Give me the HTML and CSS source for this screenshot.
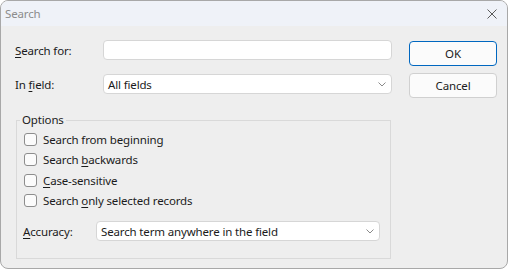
FILE: index.html
```html
<!DOCTYPE html>
<html lang="en">

<head>
    <meta charset="UTF-8">
    <meta name="viewport" content="width=device-width, initial-scale=1.0">
    <title>Search</title>
    <link rel="stylesheet" href="styles.css">
</head>

<body>
    <div class="window">
        <header class="titlebar">
            <span class="title">Search</span>
            <svg class="close" width="10" height="10" viewBox="0 0 10 10">
                <path d="M0.5 0.5 L9.5 9.5 M9.5 0.5 L0.5 9.5" stroke="#5a5a5a" stroke-width="1" fill="none" />
            </svg>
        </header>
        <main class="content">
            <div class="fields">
                <div class="row">
                    <label class="label"><u>S</u>earch for:</label>
                    <div class="input"></div>
                </div>
                <div class="row">
                    <label class="label">In <u>f</u>ield:</label>
                    <div class="input select">
                        <span>All fields</span>
                        <svg class="chevron" width="8" height="5" viewBox="0 0 8 5">
                            <path d="M0.5 0.5 L4 4 L7.5 0.5" stroke="#8a8a8a" stroke-width="1" fill="none" />
                        </svg>
                    </div>
                </div>
                <fieldset class="options">
                    <legend>Options</legend>
                    <div class="check"><span class="box"></span><span>Search from beginning</span></div>
                    <div class="check"><span class="box"></span><span>Search <u>b</u>ackwards</span></div>
                    <div class="check"><span class="box"></span><span><u>C</u>ase-sensitive</span></div>
                    <div class="check"><span class="box"></span><span>Search <u>o</u>nly selected records</span></div>
                    <div class="accuracy">
                        <label class="label small"><u>A</u>ccuracy:</label>
                        <div class="input select">
                            <span>Search term anywhere in the field</span>
                            <svg class="chevron" width="8" height="5" viewBox="0 0 8 5">
                                <path d="M0.5 0.5 L4 4 L7.5 0.5" stroke="#8a8a8a" stroke-width="1" fill="none" />
                            </svg>
                        </div>
                    </div>
                </fieldset>
            </div>
            <div class="buttons">
                <button class="btn primary">OK</button>
                <button class="btn">Cancel</button>
            </div>
        </main>
    </div>
</body>

</html>
```

FILE: styles.css
```css
* {
    margin: 0;
    padding: 0;
    box-sizing: border-box;
}

body {
    font-family: 'Noto Sans', 'Open Sans', sans-serif;
    font-size: 11.5px;
    letter-spacing: -0.15px;
    color: #1b1b1b;
    background: #ffffff;
}

.window {
    width: 508px;
    height: 269px;
    border: 1px solid #a8a8a8;
    border-radius: 8px;
    overflow: hidden;
    background: #eeeeee;
    display: flex;
    flex-direction: column;
}

.titlebar {
    height: 25px;
    flex: none;
    background: #eff2f8;
    display: flex;
    align-items: center;
    justify-content: space-between;
    padding: 0 10px 0 4px;
}

.title {
    color: #8c8c8c;
}

.content {
    display: flex;
    gap: 17px;
    padding: 14px 9px 0 14px;
}

.fields {
    width: 377px;
    display: flex;
    flex-direction: column;
}

.row {
    display: flex;
    align-items: center;
    height: 20px;
    margin-bottom: 14px;
}

.row + .row {
    margin-bottom: 18px;
}

.label {
    width: 88px;
    flex: none;
}

.label u,
.check u {
    text-decoration-thickness: 1px;
    text-underline-offset: 2px;
}

.input {
    flex: 1;
    height: 20px;
    background: #ffffff;
    border: 1px solid #d6d6d6;
    border-radius: 4px;
}

.select {
    display: flex;
    align-items: center;
    justify-content: space-between;
    padding: 0 5px 0 4px;
}

.options {
    margin-left: 1px;
    width: 375px;
    border: 1px solid #d9d9d9;
    padding: 0 10px 17px 7px;
}

.options legend {
    margin-left: -4px;
    padding: 0 2px;
    line-height: 16px;
}

.check {
    display: flex;
    align-items: center;
    height: 20.5px;
}

.check:first-of-type {
    margin-top: 1px;
}

.box {
    width: 13px;
    height: 13px;
    border: 1px solid #8d8d8d;
    border-radius: 3px;
    background: #fbfbfb;
    margin-right: 6px;
}

.accuracy {
    display: flex;
    align-items: center;
    margin-top: 10px;
}

.label.small {
    width: 73px;
    margin-left: -1px;
}

.buttons {
    display: flex;
    flex-direction: column;
    gap: 7px;
    padding-top: 1px;
}

.btn {
    width: 88px;
    height: 25px;
    font-family: inherit;
    font-size: inherit;
    letter-spacing: inherit;
    color: #1b1b1b;
    background: #fbfbfb;
    border: 1px solid #d0d0d0;
    border-radius: 4px;
}

.btn.primary {
    border-color: #0067c0;
}
```
